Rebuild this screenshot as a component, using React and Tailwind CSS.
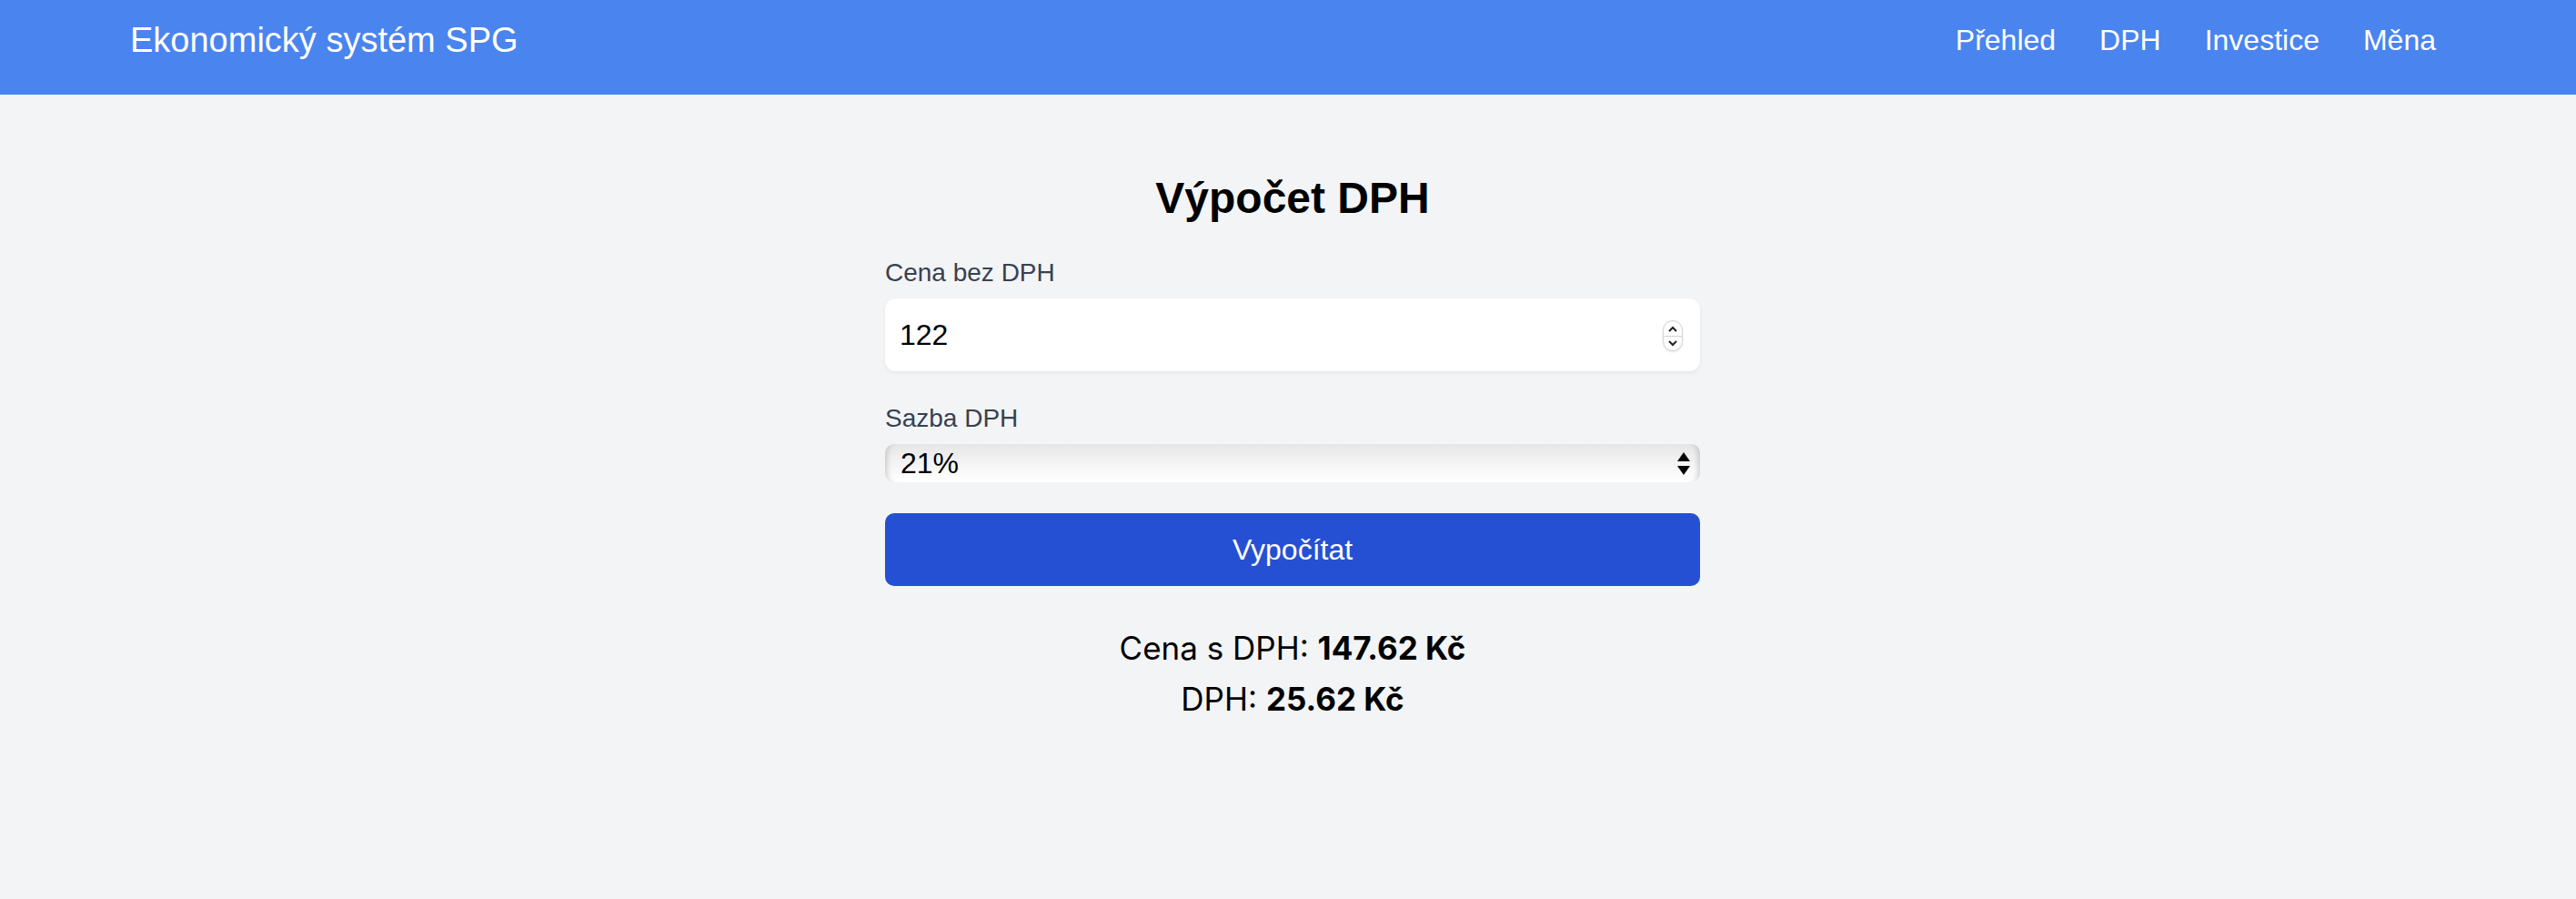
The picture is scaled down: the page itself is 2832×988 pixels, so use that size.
import React from "react";

export default function App() {
  return (
    <div className="min-h-[988px] bg-[#f3f4f6] font-['Liberation_Sans',Arial,sans-serif]">
      <header className="h-[104px] bg-[#4a84ef] text-white">
        <div className="flex justify-between pt-4 pl-[143px] pr-[154px]">
          <div className="text-[38px] leading-[56px]">Ekonomický systém SPG</div>
          <nav className="flex gap-[48px] text-[32px] leading-[56px]">
            <a>Přehled</a>
            <a>DPH</a>
            <a>Investice</a>
            <a>Měna</a>
          </nav>
        </div>
      </header>

      <div className="pl-[10px]">
        <main className="mx-auto w-[896px] pt-[82px]">
          <h1 className="text-center text-[48px] leading-[64px] font-bold text-black mb-[30px]">
            Výpočet DPH
          </h1>

          <label className="block text-[28px] leading-[40px] font-medium text-[#374151] mb-2">
            Cena bez DPH
          </label>
          <div className="relative mb-[32px]">
            <input
              type="text"
              defaultValue="122"
              className="block w-full h-[80px] rounded-[12px] bg-white px-4 text-[32px] text-black shadow-[0_2px_4px_rgba(0,0,0,0.06)] outline-none"
            />
            <div className="absolute right-[19px] top-[24px] flex h-[34px] w-[22px] flex-col items-center justify-center rounded-full border border-[#d4d4d4] bg-white shadow-[0_1px_2px_rgba(0,0,0,0.1)]">
              <svg width="12" height="8" viewBox="0 0 12 8" className="mb-[3px]">
                <path d="M2 6 L6 2 L10 6" fill="none" stroke="#222" strokeWidth="2" />
              </svg>
              <div className="h-px w-full bg-[#d4d4d4]" />
              <svg width="12" height="8" viewBox="0 0 12 8" className="mt-[3px]">
                <path d="M2 2 L6 6 L10 2" fill="none" stroke="#222" strokeWidth="2" />
              </svg>
            </div>
          </div>

          <label className="block text-[28px] leading-[40px] font-medium text-[#374151] mb-2">
            Sazba DPH
          </label>
          <div className="relative mb-[34px]">
            <select
              defaultValue="21"
              className="block w-full h-[42px] appearance-none rounded-[10px] bg-gradient-to-b from-[#e6e6e6] via-[#f4f4f4] to-white pl-[17px] text-[32px] leading-[42px] text-black shadow-[inset_8px_0_6px_-6px_rgba(0,0,0,0.18),inset_-8px_0_6px_-6px_rgba(0,0,0,0.18)] outline-none"
            >
              <option value="21">21%</option>
              <option value="12">12%</option>
              <option value="0">0%</option>
            </select>
            <div className="pointer-events-none absolute right-[11px] top-[9px] flex flex-col items-center gap-[5px]">
              <svg width="14" height="10" viewBox="0 0 14 10">
                <path d="M7 0 L14 10 L0 10 Z" fill="#000" />
              </svg>
              <svg width="14" height="10" viewBox="0 0 14 10">
                <path d="M0 0 L14 0 L7 10 Z" fill="#000" />
              </svg>
            </div>
          </div>

          <button className="block w-full h-[80px] rounded-[10px] bg-[#2650d3] text-[32px] text-white">
            Vypočítat
          </button>

          <div className="mt-[40px] text-center font-['Inter',sans-serif] text-[35px] leading-[56px] text-black">
            <p>
              Cena s DPH: <span className="font-bold">147.62 Kč</span>
            </p>
            <p>
              DPH: <span className="font-bold">25.62 Kč</span>
            </p>
          </div>
        </main>
      </div>
    </div>
  );
}
